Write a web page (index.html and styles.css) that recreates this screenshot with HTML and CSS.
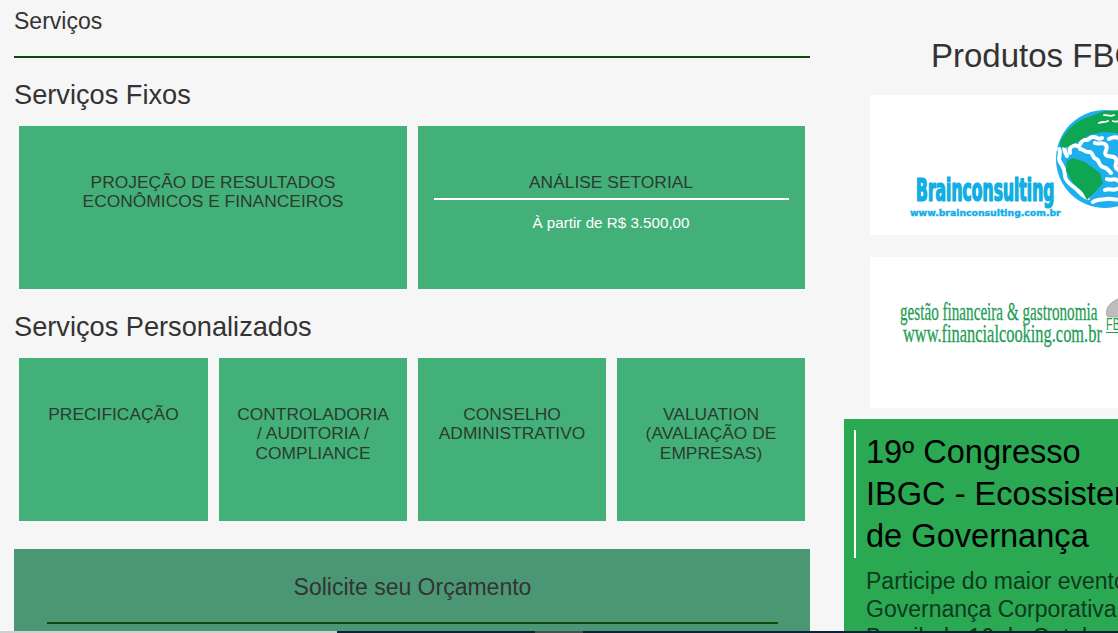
FILE: index.html
```html
<!DOCTYPE html>
<html lang="pt-BR">
<head>
<meta charset="utf-8">
<title>Serviços</title>
<link rel="stylesheet" href="styles.css">
</head>
<body>
<div class="page">
  <main class="main">
    <h1 class="page-title">Serviços</h1>
    <h2 class="section-title">Serviços Fixos</h2>
    <div class="grid grid-2">
      <div class="card"><p class="card-name">PROJEÇÃO DE RESULTADOS ECONÔMICOS E FINANCEIROS</p></div>
      <div class="card">
        <p class="card-name card-ruled">ANÁLISE SETORIAL</p>
        <p class="card-price">À partir de R$ 3.500,00</p>
      </div>
    </div>
    <h2 class="section-title section-second">Serviços Personalizados</h2>
    <div class="grid grid-4">
      <div class="card card-small"><p class="card-name">PRECIFICAÇÃO</p></div>
      <div class="card card-small"><p class="card-name">CONTROLADORIA / AUDITORIA / COMPLIANCE</p></div>
      <div class="card card-small"><p class="card-name">CONSELHO ADMINISTRATIVO</p></div>
      <div class="card card-small"><p class="card-name">VALUATION (AVALIAÇÃO DE EMPRESAS)</p></div>
    </div>
    <section class="quote">
      <h3 class="quote-title">Solicite seu Orçamento</h3>
    </section>
  </main>
  <aside class="side">
    <h2 class="side-title">Produtos FBC</h2>
    <div class="logo logo-brain">
      <div class="brain-text">
        <span class="brain-name">Brainconsulting</span>
        <span class="brain-url">www.brainconsulting.com.br</span>
      </div>
      <svg class="globe" viewBox="0 0 100 100" width="100" height="100" aria-hidden="true">
        <circle cx="50" cy="50" r="49" fill="#1eb0ee"/>
        <g fill="none" stroke="#fff" stroke-linecap="round" stroke-linejoin="round" stroke-width="4">
          <path d="M15 44c-2-5 3-9 7-7s3-7 8-6 4-4 9-3 4 3 8 1"/>
          <path d="M25 40c4 0 5 4 9 3s3 6 7 7 2 7 7 8 5 3 8 6"/>
          <path d="M40 34c4 2 8-2 11 2s-3 7 0 10 8 0 10 4-3 7 1 10 6 2 7 6"/>
          <path d="M54 30c6-3 11-2 13 3s-4 8 0 11 8 0 10 5-3 7 2 9 8 2 10 6"/>
          <path d="M68 28c6-3 11-1 13 4s-2 8 3 10 9 1 11 6"/>
          <path d="M52 70c4 2 7-1 10 1s5 3 9 0 7 1 11-1"/>
          <path d="M50 81c5-2 8 1 12-1s8-2 12 0 7 0 10-3"/>
          <path d="M38 93c4-3 9-2 14-3s9 2 14 0"/>
          <path d="M4 40c3 4-2 9 1 13s5 9 5 14 6 9 10 12 7 8 13 10"/>
          <path d="M10 37c-2 3 1 8 2 10"/>
        </g>
        <path d="M5 33C11 20 24 10 36 7l14-5 16-1 24 5 4 13-14 4-18 1-14-1-14 3-10 6-8 4-6 3-5-2z" fill="#0ea553"/>
        <path d="M12 52l6-3 12 4 15 11 3 10-7 8-9 9-5-9-9-8-7-12z" fill="#0ea553"/>
        <g fill="none" stroke="#fff" stroke-width="1.8" stroke-linecap="round">
          <path d="M44 14c4-2 5 0 9-2"/>
          <path d="M49 6c4 0 6 2 10 0"/>
          <path d="M58 12c3 2 5-1 8 1"/>
        </g>
      </svg>
    </div>
    <div class="logo logo-fin">
      <div class="fin-text">
        <span class="fin-line fin-line-a">gestão financeira &amp; gastronomia</span>
        <span class="fin-line fin-line-b">www.financialcooking.com.br</span>
      </div>
      <div class="fin-mark">
        <svg class="hat" viewBox="0 0 14 20" width="14" height="20" aria-hidden="true">
          <path d="M1 18C-1 11 3 5 12 1l2-1v19H3z" fill="#bdbdbd" stroke="#8a8a8a" stroke-width=".6"/>
        </svg>
        <span class="fin-fb">FBC</span>
      </div>
    </div>
    <section class="event">
      <h3 class="event-title">19º Congresso IBGC - Ecossistema de Governança</h3>
      <p class="event-text">Participe do maior evento de Governança Corporativa do Brasil, de 16 de Outubro</p>
    </section>
  </aside>
</div>
<div class="bottom-edge">
  <span class="edge edge-light"></span>
  <span class="edge edge-dark"></span>
  <span class="edge edge-grey"></span>
  <span class="edge edge-dark edge-fill"></span>
</div>
</body>
</html>
```
FILE: styles.css
```css
* { box-sizing: border-box; }
html, body { margin: 0; height: 100%; overflow: hidden; }
body {
  background: #f6f6f6;
  color: #333;
  font-family: "Liberation Sans", Arial, sans-serif;
  position: relative;
}
.page { display: flex; width: 1400px; align-items: flex-start; }
.main { width: 796px; margin-left: 14px; flex: none; }
.page-title {
  margin: 0;
  height: 58px;
  padding-top: 9px;
  font-size: 23px;
  line-height: 24px;
  font-weight: 400;
  border-bottom: 2px solid #0f4a0c;
}
.section-title { margin: 22px 0 0; font-size: 27.2px; line-height: 30px; font-weight: 400; }
.section-second { margin-top: 23px; }
.grid { display: grid; gap: 11px; padding: 0 5px; margin-top: 16px; }
.grid-2 { grid-template-columns: 388px 387px; gap: 10.5px; }
.grid-4 { grid-template-columns: 189px 188px 188px 188px; }
.card {
  height: 163px;
  background: #43b079;
  padding: 47px 16px 0;
  text-align: center;
}
.card-small { padding: 47px 16px 0; }
.card-name { margin: 0; font-size: 17.4px; line-height: 19.4px; color: #2c3b30; }
.card-ruled { padding-bottom: 6px; border-bottom: 2px solid #fff; }
.card-price { margin: 12px 0 0; color: #fff; font-size: 15.2px; line-height: 22px; }
.quote {
  margin-top: 28px;
  height: 120px;
  background: #4c9773;
  padding: 0 32px 0 33px;
}
.quote-title {
  margin: 0;
  height: 75px;
  padding-top: 24px;
  font-size: 23px;
  line-height: 28px;
  font-weight: 400;
  text-align: center;
  color: #333;
  border-bottom: 2px solid #0f4a0c;
}
.side { margin-left: 34px; width: 400px; flex: none; }
.side-title {
  margin: 37px 0 0 87px;
  font-size: 33px;
  line-height: 38px;
  font-weight: 400;
  white-space: nowrap;
}
.logo { background: #fff; margin-left: 26px; width: 300px; position: relative; overflow: hidden; }
.logo-brain { height: 140px; margin-top: 20px; }
.brain-text { position: absolute; left: 40px; top: 80px; }
.brain-name {
  display: block;
  font-family: "DejaVu Sans", sans-serif;
  font-weight: 700;
  font-size: 24px;
  line-height: 30px;
  color: #10aeea;
  -webkit-text-stroke: .8px #10aeea;
  text-shadow: 0 0 1px #129a62;
  transform: scale(.65, 1.32);
  transform-origin: left center;
  margin-left: 6px;
  white-space: nowrap;
}
.brain-url {
  display: block;
  margin-top: 3px;
  font-family: "DejaVu Sans", sans-serif;
  font-size: 9.3px;
  line-height: 10px;
  font-weight: 700;
  color: #10aeea;
  -webkit-text-stroke: .4px #10aeea;
  white-space: nowrap;
}
.globe { position: absolute; left: 185px; top: 14px; }
.logo-fin { height: 151px; margin-top: 22px; }
.fin-text {
  position: absolute;
  left: 30px;
  top: 43px;
  font-family: "Liberation Serif", serif;
  color: #1f9d55;
  white-space: nowrap;
}
.fin-line { display: block; transform-origin: left center; -webkit-text-stroke: .3px #1f9d55; }
.fin-line-a { font-size: 26px; line-height: 23px; transform: scaleX(.583); }
.fin-line-b { font-size: 25px; line-height: 22px; margin-left: 3px; transform: scaleX(.656); }
.fin-mark { position: absolute; left: 236px; top: 41px; width: 30px; }
.hat { display: block; }
.fin-fb {
  display: block;
  font-size: 16px;
  line-height: 14px;
  color: #1f9d55;
  border-bottom: 1px solid #1f9d55;
  transform: scaleX(.68);
  transform-origin: left center;
}
.event {
  margin: 11px 0 0 0;
  width: 400px;
  height: 300px;
  background: #2aa852;
  padding: 11px 78px 0 10px;
}
.event-title {
  margin: 0;
  padding: 1px 0 1px 10px;
  border-left: 2px solid #fff;
  font-size: 32.6px;
  line-height: 42px;
  font-weight: 400;
  color: #000;
}
.event-text {
  margin: 9px 0 0 12px;
  font-size: 23px;
  line-height: 28px;
  color: #0f3a1f;
}
.bottom-edge {
  position: absolute;
  left: 0;
  right: 0;
  bottom: 0;
  height: 2px;
  display: flex;
}
.edge { display: block; height: 2px; }
.edge-light { width: 337px; background: #cfcfcf; }
.edge-dark { width: 198px; background: #0e2034; }
.edge-grey { width: 48px; background: #4a4f55; }
.edge-fill { flex: 1; }
```
